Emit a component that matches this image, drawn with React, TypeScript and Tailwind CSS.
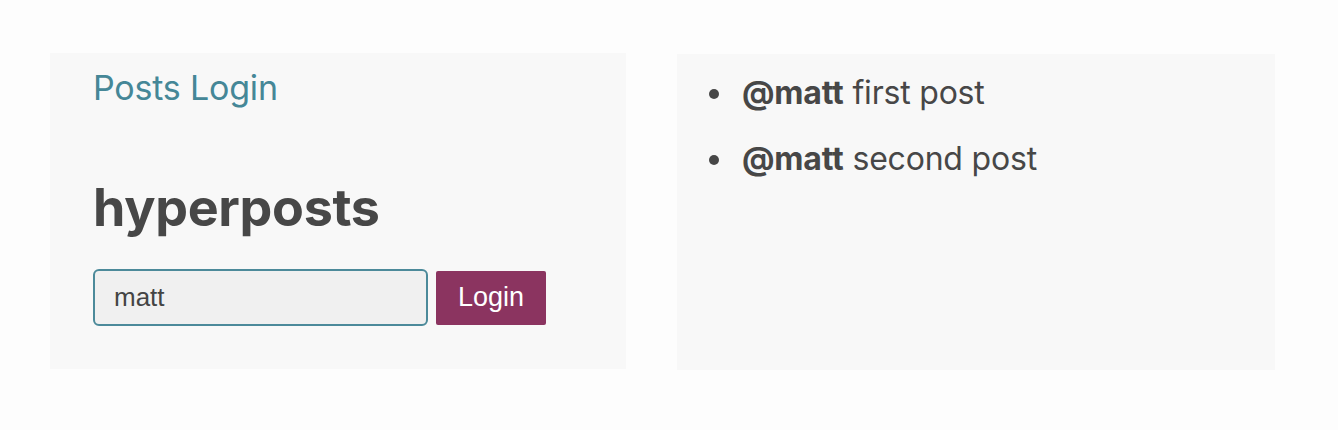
import React from 'react';

const posts = [
  { id: 1, user: 'matt', text: 'first post' },
  { id: 2, user: 'matt', text: 'second post' },
];

export default function App() {
  return (
    <div className="min-h-[430px] bg-[#fdfdfd] pt-[53px] pl-[50px] font-['Inter',sans-serif] text-[#474747]">
      <div className="flex gap-[51px] items-start">
        {/* левая колонка */}
        <div className="w-[576px] h-[316px] bg-[#f8f8f8] pl-[43px] pt-[15px]">
          <nav className="text-[34px] leading-[40px] tracking-[-0.2px] text-[#458797]">
            <a href="#">Posts</a> <a href="#">Login</a>
          </nav>
          <h1 className="mt-[70px] text-[52px] leading-[60px] font-bold tracking-[-0.3px]">hyperposts</h1>
          <form className="mt-[31px] flex items-center gap-2">
            <input
              defaultValue="matt"
              className="w-[335px] h-[57px] rounded-[6px] border-2 border-[#4c8a9a] bg-[#f0f0f0] px-[19px] text-[26px] font-['Liberation_Sans',sans-serif] text-[#444] outline-none"
            />
            <button type="button" className="w-[110px] h-[54px] rounded-[2px] bg-[#8b3460] text-white text-[27px] font-['Liberation_Sans',sans-serif]">
              Login
            </button>
          </form>
        </div>

        {/* посты */}
        <div className="w-[598px] h-[316px] bg-[#f8f8f8] mt-[1px] pt-[19px] pl-[59px]">
          <ul className="list-disc space-y-[26px] text-[32px] leading-[40px] tracking-[-0.2px]">
            {posts.map(p => (
              <li key={p.id} className="pl-[6px]">
                <b className="font-bold">@{p.user}</b> {p.text}
              </li>
            ))}
          </ul>
        </div>
      </div>
    </div>
  );
}
